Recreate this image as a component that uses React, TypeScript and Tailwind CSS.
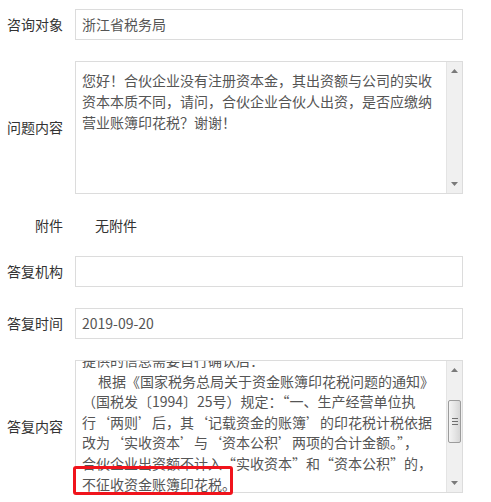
import React from "react";

function Arrow({ up }: { up: boolean }) {
  return (
    <svg width="7" height="4" viewBox="0 0 7 4">
      {up ? <polygon points="3.5,0 7,4 0,4" fill="#7a7a7a" /> : <polygon points="0,0 7,0 3.5,4" fill="#7a7a7a" />}
    </svg>
  );
}

function Scrollbar({ thumb }: { thumb: boolean }) {
  return (
    <div className="w-[16px] h-full bg-[#f0f0f0] border-l border-[#e4e4e4] flex flex-col">
      <div className="h-[17px] flex items-center justify-center pt-[1px]">
        <Arrow up />
      </div>
      <div className="flex-1 pt-[22px] pl-[1px]">
        {thumb && (
          <div className="w-[13px] h-[43px] rounded-[2px] border border-[#9c9c9c] bg-gradient-to-r from-[#f4f4f4] via-[#e6e6e6] to-[#d6d6d6] flex flex-col items-center justify-center gap-[2px]">
            <div className="w-[6px] h-[1px] bg-[#6f6f6f]" />
            <div className="w-[6px] h-[1px] bg-[#6f6f6f]" />
            <div className="w-[6px] h-[1px] bg-[#6f6f6f]" />
          </div>
        )}
      </div>
      <div className="h-[17px] flex items-center justify-center pb-[2px]">
        <Arrow up={false} />
      </div>
    </div>
  );
}

function Label({ children }: { children: React.ReactNode }) {
  return <div className="w-[63px] shrink-0 text-right text-[#333]">{children}</div>;
}

export default function App() {
  const question = [
    "您好！合伙企业没有注册资本金，其出资额与公司的实收",
    "资本本质不同，请问，合伙企业合伙人出资，是否应缴纳",
    "营业账簿印花税？谢谢！",
  ];
  const answer = [
    { t: "提供的信息需要自行确认后：", i: false },
    { t: "根据《国家税务总局关于资金账簿印花税问题的通知》", i: true },
    { t: "（国税发〔1994〕25号）规定：“一、生产经营单位执", i: false },
    { t: "行‘两则’后，其‘记载资金的账簿’的印花税计税依据", i: false },
    { t: "改为‘实收资本’与‘资本公积’两项的合计金额。”，", i: false },
    { t: "合伙企业出资额不计入“实收资本”和“资本公积”的，", i: false },
    { t: "不征收资金账簿印花税。", i: false },
  ];
  return (
    <div
      lang="zh-CN"
      className="relative w-[491px] h-[502px] overflow-hidden bg-white pt-[9px] flex flex-col gap-[21px] text-[14px] font-['Noto_Sans_CJK_SC','Noto_Sans',sans-serif]"
    >
      <div className="flex items-center">
        <Label>咨询对象</Label>
        <div className="ml-[12px] w-[388px] h-[31px] border border-[#dcdcdc] px-[6px] flex items-center text-[#555]">
          浙江省税务局
        </div>
      </div>

      <div className="flex items-center">
        <Label>问题内容</Label>
        <div className="ml-[12px] w-[388px] h-[133px] border border-[#dcdcdc] flex">
          <div className="flex-1 overflow-hidden pl-[6px] pt-[8px] leading-[21px] text-[#555]">
            {question.map((l, k) => (
              <div key={k} className="whitespace-nowrap">{l}</div>
            ))}
          </div>
          <Scrollbar thumb={false} />
        </div>
      </div>

      <div className="flex items-center h-[20px]">
        <Label>附件</Label>
        <div className="ml-[32px] text-[#333]">无附件</div>
      </div>

      <div className="flex items-center">
        <Label>答复机构</Label>
        <div className="ml-[12px] w-[388px] h-[31px] border border-[#dcdcdc]" />
      </div>

      <div className="flex items-center">
        <Label>答复时间</Label>
        <div className="ml-[12px] w-[388px] h-[31px] border border-[#dcdcdc] px-[6px] flex items-center text-[#555]">
          2019-09-20
        </div>
      </div>

      <div className="flex items-center">
        <Label>答复内容</Label>
        <div className="ml-[12px] w-[388px] h-[133px] border border-[#dcdcdc] flex">
          <div className="flex-1 overflow-hidden pl-[6px]">
            <div className="mt-[-11px] leading-[20.6px] text-[#555]">
              {answer.map((l, k) => (
                <div key={k} className={l.i ? "whitespace-nowrap pl-[16px]" : "whitespace-nowrap"}>{l.t}</div>
              ))}
            </div>
          </div>
          <Scrollbar thumb />
        </div>
      </div>

      <div className="absolute left-[73px] top-[466px] w-[160px] h-[29px] border-[3px] border-[#f0141c] rounded-[3px]" />
    </div>
  );
}
